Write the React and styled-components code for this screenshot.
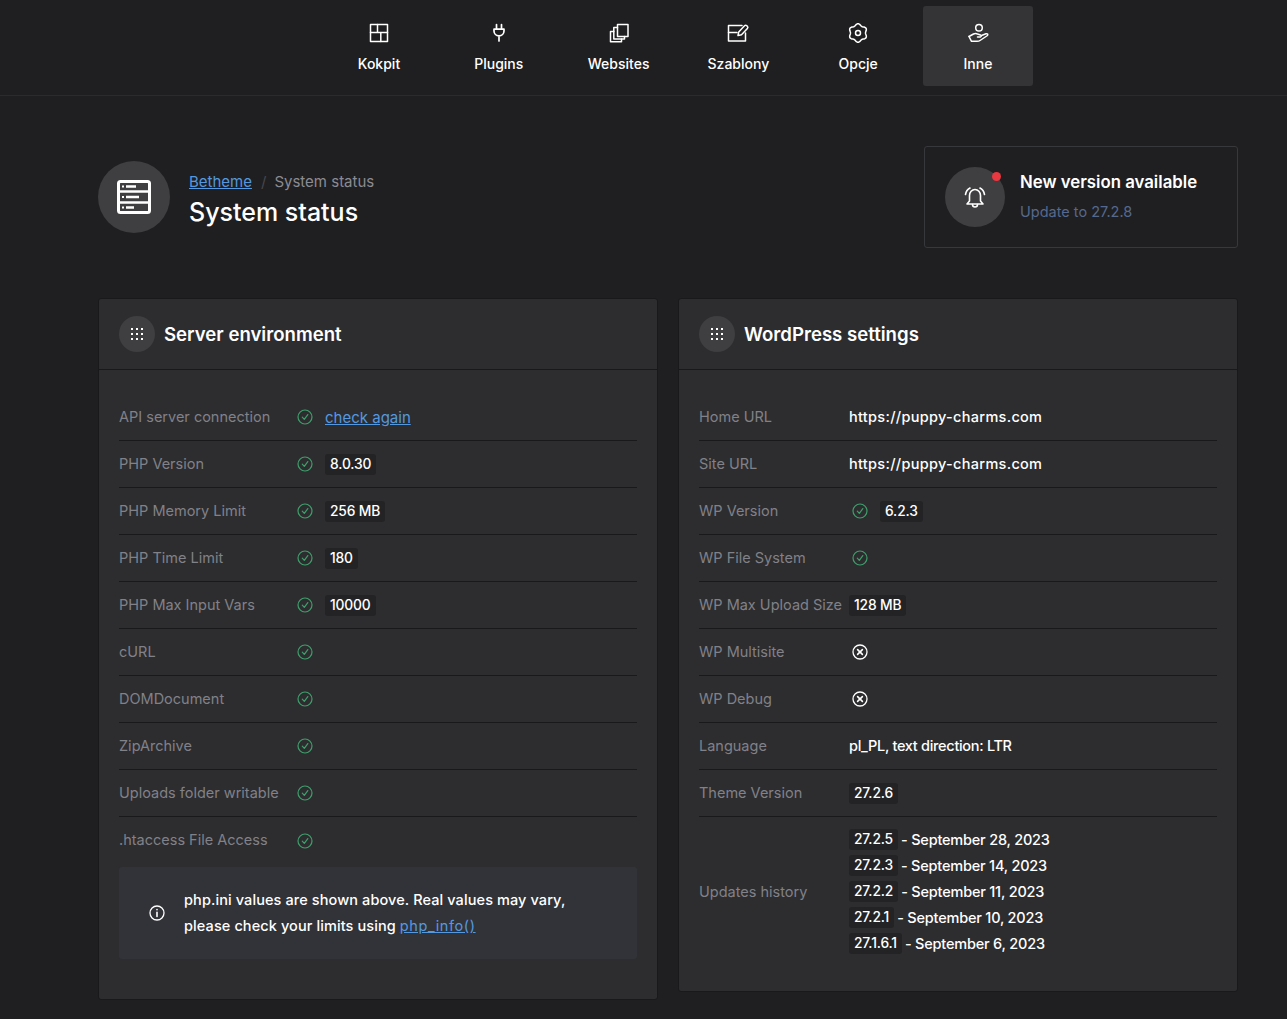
import React from 'react'
import styled, { createGlobalStyle } from 'styled-components'

const GlobalStyle = createGlobalStyle`
  html, body { margin: 0; padding: 0; background: #1f1f21; }
  body {
    font-family: Inter, "Open Sans", "Liberation Sans", sans-serif;
    font-size: 14px;
    color: #fff;
  }
  * { box-sizing: border-box; }
`

const Page = styled.div`
  width: 1287px;
  height: 1019px;
  overflow: hidden;
  background: #1f1f21;
`

const TopBar = styled.nav`
  height: 96px;
  display: flex;
  justify-content: center;
  padding-top: 6px;
  padding-left: 70px;
  border-bottom: 1px solid #2b2b2e;
`

const TopItem = styled.a`
  width: 110px;
  height: 80px;
  margin-right: 9.8px;
  display: flex;
  flex-direction: column;
  align-items: center;
  padding-top: 15px;
  border-radius: 3px;
  background: ${(p) => (p.$active ? '#343436' : 'transparent')};
  color: #fff;
  font-size: 14px;
  font-weight: 500;
  &:last-child { margin-right: 0; }
  svg { display: block; margin-bottom: 10px; }
`

const Main = styled.main`
  padding: 50px 49px 0 98px;
`

const Head = styled.header`
  display: flex;
  justify-content: space-between;
  align-items: flex-start;
  margin-bottom: 50px;
`

const TitleBlock = styled.div`
  display: flex;
  align-items: center;
  gap: 19px;
  padding-top: 15px;
`

const TitleText = styled.div`
  padding-top: 4px;
`

const RoundIcon = styled.div`
  flex: none;
  position: relative;
  width: ${(p) => p.$size}px;
  height: ${(p) => p.$size}px;
  border-radius: 50%;
  background: #3f3f41;
  display: flex;
  align-items: center;
  justify-content: center;
`

const Crumbs = styled.div`
  display: flex;
  align-items: center;
  font-size: 15px;
  line-height: 22px;
  color: #8b8b93;
`

const Sep = styled.span`
  color: #47474b;
  margin: 0 8px 0 9px;
`

const Link = styled.a`
  color: #5499e0;
  font-weight: 400;
  text-decoration: underline;
  cursor: pointer;
  letter-spacing: ${(p) => p.$track || 0}px;
`

const PageTitle = styled.h1`
  margin: 3px 0 0;
  font-size: 25px;
  line-height: 32px;
  font-weight: 500;
`

const Notice = styled.div`
  width: 314px;
  height: 102px;
  border: 1px solid #37383c;
  border-radius: 3px;
  display: flex;
  align-items: center;
  gap: 15px;
  padding-left: 20px;
`

const Dot = styled.span`
  position: absolute;
  top: 5px;
  right: 4px;
  width: 9px;
  height: 9px;
  border-radius: 50%;
  background: #e9383f;
`

const NoticeTitle = styled.div`
  font-size: 16.8px;
  line-height: 22px;
  font-weight: 600;
`

const NoticeSub = styled.div`
  margin-top: 8px;
  font-size: 14.5px;
  line-height: 22px;
  color: #55698f;
`

const Columns = styled.div`
  display: grid;
  grid-template-columns: 560px 560px;
  gap: 20px;
  align-items: start;
`

const Card = styled.section`
  background: #2d2d2f;
  border: 1px solid #19191b;
  border-radius: 3px;
  height: ${(p) => p.$height}px;
`

const CardHead = styled.div`
  height: 71px;
  display: flex;
  align-items: center;
  gap: 9px;
  padding-left: 20px;
  border-bottom: 1px solid #19191b;
`

const CardTitle = styled.h2`
  margin: 0;
  font-size: 18.6px;
  font-weight: 600;
`

const CardBody = styled.div`
  padding: 24px 20px 0;
`

const Row = styled.div`
  display: flex;
  align-items: center;
  min-height: 47px;
  border-bottom: ${(p) => (p.$last ? 'none' : '1px solid #19191b')};
`

const Label = styled.div`
  flex: none;
  width: ${(p) => p.$w}px;
  margin-top: -2px;
  color: #818189;
  font-size: 14.5px;
`

const Value = styled.div`
  display: flex;
  align-items: center;
  font-size: 14.5px;
  font-weight: 500;
`

const Plain = styled.span`
  margin-top: -2px;
  letter-spacing: ${(p) => p.$track || 0}px;
`

const StatusLink = styled(Link)`
  font-size: 15px;
`

const StatusIcon = styled.span`
  display: flex;
  width: 16px;
  height: 16px;
  margin-right: ${(p) => (p.$gap ? 12 : 0)}px;
  color: ${(p) => (p.$off ? '#fff' : '#3f9f6c')};
`

const Tag = styled.span`
  display: inline-block;
  background: #232325;
  border-radius: 3px;
  padding: 0 5px;
  line-height: 21px;
  font-size: 13.8px;
  font-weight: 500;
  letter-spacing: -0.15px;
  color: #fff;
`

const HistoryList = styled.div`
  padding: 9px 0 11px;
`

const HistoryLine = styled.div`
  height: 26px;
  display: flex;
  align-items: center;
  gap: 3px;
  font-size: 14.5px;
  font-weight: 500;
  letter-spacing: -0.2px;
`

const InfoBox = styled.div`
  height: 92px;
  margin-top: 3px;
  background: #323338;
  border-radius: 3px;
  display: flex;
  align-items: center;
  gap: 19px;
  padding-left: 30px;
  font-size: 14.5px;
  font-weight: 500;
  line-height: 26px;
  letter-spacing: 0.1px;
`

const Check = () => (
  <svg width="16" height="16" viewBox="0 0 16 16" fill="none" stroke="currentColor" strokeWidth="1.2" strokeLinecap="round" strokeLinejoin="round">
    <circle cx="8" cy="8" r="7" />
    <path d="M5.3 8.2 7.3 10.3 10.8 5.6" />
  </svg>
)

const Cross = () => (
  <svg width="16" height="16" viewBox="0 0 16 16" fill="none" stroke="currentColor" strokeWidth="1.3" strokeLinecap="round">
    <circle cx="8" cy="8" r="7" />
    <path d="M5.6 5.6 10.4 10.4M10.4 5.6 5.6 10.4" strokeWidth="1.6" />
  </svg>
)

const NavSvg = ({ children, weight = 1.5 }) => (
  <svg width="24" height="24" viewBox="0 0 24 24" fill="none" stroke="#fff" strokeWidth={weight} strokeLinecap="round" strokeLinejoin="round">
    {children}
  </svg>
)

// six soft lobes around the centre, sampled into a closed outline
const gearOutline =
  Array.from({ length: 72 }, (_, i) => {
    const a = (i / 72) * Math.PI * 2
    const r = 8.4 - 0.9 * Math.cos(6 * a)
    return `${(12 + r * Math.cos(a)).toFixed(2)} ${(12 + r * Math.sin(a)).toFixed(2)}`
  })
    .join('L')
    .replace(/^/, 'M') + 'Z'

const navItems = [
  {
    name: 'Kokpit',
    icon: (
      <NavSvg>
        <rect x="3.5" y="3.5" width="17" height="17" />
        <path d="M10.500 3.500V11.500M3.500 11.500H20.500M13.800 11.500V20.500" />
      </NavSvg>
    ),
  },
  {
    name: 'Plugins',
    icon: (
      <NavSvg weight={1.7}>
        <path d="M9.500 3.500V8M14.500 3.500V8M7 8.200H17V10A5 4.800 0 0 1 7 10ZM12 15V20" />
      </NavSvg>
    ),
  },
  {
    name: 'Websites',
    icon: (
      <NavSvg>
        <rect x="10.500" y="3.500" width="10.500" height="12" />
        <path d="M10.500 6.500H6.800V18H17.500V15.500" />
        <path d="M6.800 10.500H3.500V20.800H14.500V18" />
      </NavSvg>
    ),
  },
  {
    name: 'Szablony',
    icon: (
      <NavSvg>
        <path d="M16 4.500H2.500V20H19.500V12" />
        <path d="M2.500 11.500H11" />
        <path d="M12 14.500 12.700 11 18.500 4.700Q19.500 3.800 20.800 4.700L21.500 5.500Q22.300 6.500 21.400 7.500L15.500 13.800Z" />
      </NavSvg>
    ),
  },
  {
    name: 'Opcje',
    icon: (
      <NavSvg>
        <path d={gearOutline} />
        <circle cx="12" cy="12" r="2.500" />
      </NavSvg>
    ),
  },
  {
    name: 'Inne',
    active: true,
    icon: (
      <NavSvg>
        <circle cx="13" cy="6.800" r="3.300" />
        <path d="M3 15.500 7.500 13Q9.500 12 11.500 13L14.500 14Q16 15 14.500 16H11.500" />
        <path d="M15.500 14.500 20 12.800Q22.500 12.500 21.500 14.500L14 19.500Q13 20.300 11 20.300H5.500L3 15.500" />
      </NavSvg>
    ),
  },
]

const serverRows = [
  { label: 'API server connection', link: 'check again' },
  { label: 'PHP Version', tag: '8.0.30' },
  { label: 'PHP Memory Limit', tag: '256 MB' },
  { label: 'PHP Time Limit', tag: '180' },
  { label: 'PHP Max Input Vars', tag: '10000' },
  { label: 'cURL' },
  { label: 'DOMDocument' },
  { label: 'ZipArchive' },
  { label: 'Uploads folder writable' },
  { label: '.htaccess File Access', last: true },
]

const history = [
  ['27.2.5', '- September 28, 2023'],
  ['27.2.3', '- September 14, 2023'],
  ['27.2.2', '- September 11, 2023'],
  ['27.2.1', '- September 10, 2023'],
  ['27.1.6.1', '- September 6, 2023'],
]

function Grip() {
  const dots = []
  for (let y = 0; y < 3; y++) {
    for (let x = 0; x < 3; x++) {
      dots.push(<rect key={`${x}${y}`} x={1 + x * 5} y={1 + y * 5} width="2" height="2" fill="#fff" />)
    }
  }
  return (
    <svg width="14" height="14" viewBox="0 0 14 14">
      {dots}
    </svg>
  )
}

function PanelHead({ title }) {
  return (
    <CardHead>
      <RoundIcon $size={36}>
        <Grip />
      </RoundIcon>
      <CardTitle>{title}</CardTitle>
    </CardHead>
  )
}

export default function App() {
  return (
    <Page>
      <GlobalStyle />
      <TopBar>
        {navItems.map((item) => (
          <TopItem key={item.name} $active={item.active}>
            {item.icon}
            {item.name}
          </TopItem>
        ))}
      </TopBar>
      <Main>
        <Head>
          <TitleBlock>
            <RoundIcon $size={72}>
              <svg width="36" height="36" viewBox="0 0 36 36" fill="none">
                <rect x="2.500" y="2.500" width="31" height="31" rx="2" stroke="#fff" strokeWidth="3" />
                <path d="M3 12.500H33M3 23.500H33" stroke="#fff" strokeWidth="2.500" />
                <path d="M6 7.500H8M6 18H8M6 28.500H8" stroke="#fff" strokeWidth="2" />
                <path d="M10 7.500H20M10 18H23M10 28.500H18" stroke="#fff" strokeWidth="2.500" />
              </svg>
            </RoundIcon>
            <TitleText>
              <Crumbs>
                <Link>Betheme</Link>
                <Sep>/</Sep>
                System status
              </Crumbs>
              <PageTitle>System status</PageTitle>
            </TitleText>
          </TitleBlock>
          <Notice>
            <RoundIcon $size={60}>
              <svg width="24" height="24" viewBox="0 0 24 24" fill="none" stroke="#fff" strokeWidth="1.600" strokeLinecap="round" strokeLinejoin="round">
                <path d="M6.500 16V10.500A5.500 6 0 0 1 17.500 10.500V16L20 19H4Z" />
                <path d="M9.500 19.500A2.500 2.500 0 0 0 14.500 19.500" />
                <path d="M2.500 9.500C3 6.500 4.500 4.200 7 3M21.500 9.500C21 6.500 19.500 4.200 17 3" />
              </svg>
              <Dot />
            </RoundIcon>
            <div>
              <NoticeTitle>New version available</NoticeTitle>
              <NoticeSub>Update to 27.2.8</NoticeSub>
            </div>
          </Notice>
        </Head>
        <Columns>
          <Card $height={702}>
            <PanelHead title="Server environment" />
            <CardBody>
              {serverRows.map((row) => (
                <Row key={row.label} $last={row.last}>
                  <Label $w={178}>{row.label}</Label>
                  <Value>
                    <StatusIcon $gap>
                      <Check />
                    </StatusIcon>
                    {row.link && <StatusLink>{row.link}</StatusLink>}
                    {row.tag && <Tag>{row.tag}</Tag>}
                  </Value>
                </Row>
              ))}
              <InfoBox>
                <svg width="16" height="16" viewBox="0 0 16 16" fill="none" stroke="#fff" strokeWidth="1.300" strokeLinecap="round">
                  <circle cx="8" cy="8" r="7" />
                  <path d="M8 7.300V11.500M8 4.500V4.700" strokeWidth="1.600" />
                </svg>
                <div>
                  php.ini values are shown above. Real values may vary,
                  <br />
                  please check your limits using <Link $track={0.6}>php_info()</Link>
                </div>
              </InfoBox>
            </CardBody>
          </Card>
          <Card $height={694}>
            <PanelHead title="WordPress settings" />
            <CardBody>
              <Row>
                <Label $w={150}>Home URL</Label>
                <Value>
                  <Plain $track={0.3}>https://puppy-charms.com</Plain>
                </Value>
              </Row>
              <Row>
                <Label $w={150}>Site URL</Label>
                <Value>
                  <Plain $track={0.3}>https://puppy-charms.com</Plain>
                </Value>
              </Row>
              <Row>
                <Label $w={153}>WP Version</Label>
                <Value>
                  <StatusIcon $gap>
                    <Check />
                  </StatusIcon>
                  <Tag>6.2.3</Tag>
                </Value>
              </Row>
              <Row>
                <Label $w={153}>WP File System</Label>
                <Value>
                  <StatusIcon>
                    <Check />
                  </StatusIcon>
                </Value>
              </Row>
              <Row>
                <Label $w={150}>WP Max Upload Size</Label>
                <Value>
                  <Tag>128 MB</Tag>
                </Value>
              </Row>
              <Row>
                <Label $w={153}>WP Multisite</Label>
                <Value>
                  <StatusIcon $off>
                    <Cross />
                  </StatusIcon>
                </Value>
              </Row>
              <Row>
                <Label $w={153}>WP Debug</Label>
                <Value>
                  <StatusIcon $off>
                    <Cross />
                  </StatusIcon>
                </Value>
              </Row>
              <Row>
                <Label $w={150}>Language</Label>
                <Value>
                  <Plain $track={-0.3}>pl_PL, text direction: LTR</Plain>
                </Value>
              </Row>
              <Row>
                <Label $w={150}>Theme Version</Label>
                <Value>
                  <Tag>27.2.6</Tag>
                </Value>
              </Row>
              <Row $last>
                <Label $w={150}>Updates history</Label>
                <HistoryList>
                  {history.map(([version, date]) => (
                    <HistoryLine key={version}>
                      <Tag>{version}</Tag>
                      {date}
                    </HistoryLine>
                  ))}
                </HistoryList>
              </Row>
            </CardBody>
          </Card>
        </Columns>
      </Main>
    </Page>
  )
}
